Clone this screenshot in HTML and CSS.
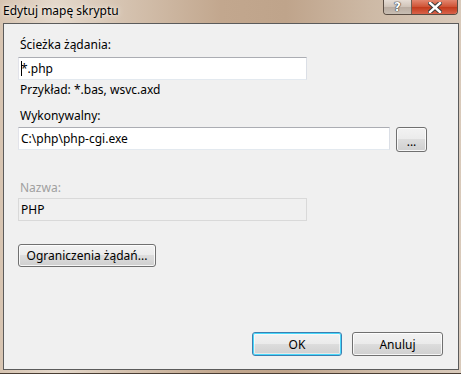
FILE: index.html
```html
<!DOCTYPE html>
<html lang="pl">
<head>
  <meta charset="UTF-8" />
  <meta name="viewport" content="width=device-width, initial-scale=1.0" />
  <title>Edytuj mapę skryptu</title>
  <link rel="stylesheet" href="styles.css">
</head>
<body>

  <div class="window">
    <div class="titlebar">
      <span class="title">Edytuj mapę skryptu</span>
      <div class="caption-buttons">
        <span class="cap-btn help">?</span>
        <span class="cap-btn close">
          <svg width="14" height="11" viewBox="0 0 14 11">
            <path d="M2 1 L12 10 M12 1 L2 10" stroke="#3b3b3b" stroke-width="4.4" stroke-linecap="square" />
            <path d="M2 1 L12 10 M12 1 L2 10" stroke="#ffffff" stroke-width="2.4" stroke-linecap="square" />
          </svg>
        </span>
      </div>
    </div>

    <div class="client">
      <label class="label">Ścieżka żądania:</label>
      <div class="textbox short"><span class="caret"></span>*.php</div>
      <p class="hint">Przykład: *.bas, wsvc.axd</p>

      <label class="label gap-top">Wykonywalny:</label>
      <div class="row">
        <div class="textbox long">C:\php\php-cgi.exe</div>
        <button class="btn browse">...</button>
      </div>

      <label class="label disabled gap-top2">Nazwa:</label>
      <div class="textbox short readonly">PHP</div>

      <button class="btn limits">Ograniczenia żądań...</button>

      <div class="footer">
        <button class="btn dialog default">OK</button>
        <button class="btn dialog">Anuluj</button>
      </div>
    </div>
  </div>

</body>
</html>
```

FILE: styles.css
```css
* {
  box-sizing: border-box;
}

html, body {
  margin: 0;
  height: 100%;
}

body {
  font-family: "Noto Sans", "Open Sans", sans-serif;
  font-size: 12px;
  color: #000;
  background: #c9b39e;
}

.window {
  width: 461px;
  height: 374px;
  display: flex;
  flex-direction: column;
  padding: 0 2px 3px 3px;
  background: linear-gradient(to right, #d7c4b1 0%, #e4d8cb 12%, #d4c1ae 28%, #c2a78e 48%, #bfa48b 62%, #cdb9a5 80%, #d9cabb 100%);
  border-bottom: 1px solid #4a3e34;
}

.titlebar {
  height: 23px;
  display: flex;
  align-items: flex-start;
  position: relative;
}

.title {
  padding: 3px 0 0 0;
  line-height: 15px;
  color: #000;
  text-shadow: 0 0 6px #f4ede5, 0 0 3px #f4ede5;
}

.caption-buttons {
  margin-left: auto;
  margin-right: 1px;
  display: flex;
  height: 15px;
  border: 1px solid #5a4d43;
  border-top: none;
  border-radius: 0 0 4px 4px;
  overflow: hidden;
}

.cap-btn {
  display: flex;
  align-items: center;
  justify-content: center;
  height: 100%;
}

.help {
  width: 28px;
  font-family: "DejaVu Sans", sans-serif;
  font-weight: bold;
  font-size: 12px;
  color: #fff;
  text-shadow: 0 0 1px #333, 0 0 1px #333, 0 0 1px #333;
  background: linear-gradient(#e6ddd5, #cfc3b8 50%, #b9aca1 51%, #c8bdb2);
  border-right: 1px solid #6e5f53;
}

.close {
  width: 45px;
  background: linear-gradient(#e2866f, #cf5436 48%, #c23b1c 52%, #d9624a);
}

.client {
  flex: 1;
  display: flex;
  flex-direction: column;
  align-items: flex-start;
  background: #f0f0f0;
  border: 1px solid #5b5b5b;
  padding: 13px 15px 13px 14px;
}

.label {
  display: block;
  line-height: 15px;
  padding-left: 2px;
}

.label.disabled {
  color: #a0a0a0;
}

.gap-top {
  margin-top: 11px;
}

.gap-top2 {
  margin-top: 28px;
}

.textbox {
  height: 23px;
  margin-top: 5px;
  padding: 0 2px;
  line-height: 21px;
  background: #fff;
  border: 1px solid #e3e9ef;
  border-top-color: #abadb3;
  border-left-color: #e2e3ea;
  border-right-color: #dbdfe6;
  position: relative;
}

.textbox.short {
  width: 289px;
}

.textbox.long {
  width: 372px;
}

.textbox.readonly {
  margin-top: 3px;
  background: #f0f0f0;
  border-color: #d9d9d9;
}

.caret {
  position: absolute;
  left: 2px;
  top: 3px;
  width: 1px;
  height: 15px;
  background: #000;
}

.hint {
  margin: 2px 0 0 0;
  padding-left: 2px;
  line-height: 15px;
}

.row {
  display: flex;
  align-items: flex-start;
  gap: 6px;
  margin-top: 4px;
}

.row .textbox {
  margin-top: 0;
}

.btn {
  font-family: inherit;
  font-size: 12px;
  color: #000;
  height: 23px;
  padding: 0 10px;
  border: 1px solid #707070;
  border-radius: 3px;
  background: linear-gradient(#f2f2f2 0%, #ebebeb 49%, #dddddd 50%, #cfcfcf 100%);
  box-shadow: inset 0 0 0 1px rgba(255, 255, 255, 0.8);
  cursor: pointer;
}

.browse {
  width: 31px;
  height: 25px;
  padding: 0;
  line-height: 1;
  padding-top: 4px;
}

.limits {
  margin-top: 23px;
  width: 138px;
  padding: 0;
}

.footer {
  margin-top: auto;
  align-self: stretch;
  display: flex;
  justify-content: flex-end;
  gap: 10px;
}

.dialog {
  width: 91px;
  height: 24px;
}

.dialog.default {
  width: 90px;
  border-color: #3c7fb1;
  box-shadow: inset 0 0 0 1px #48d8fb, inset 0 0 0 2px rgba(255, 255, 255, 0.5);
}
```
